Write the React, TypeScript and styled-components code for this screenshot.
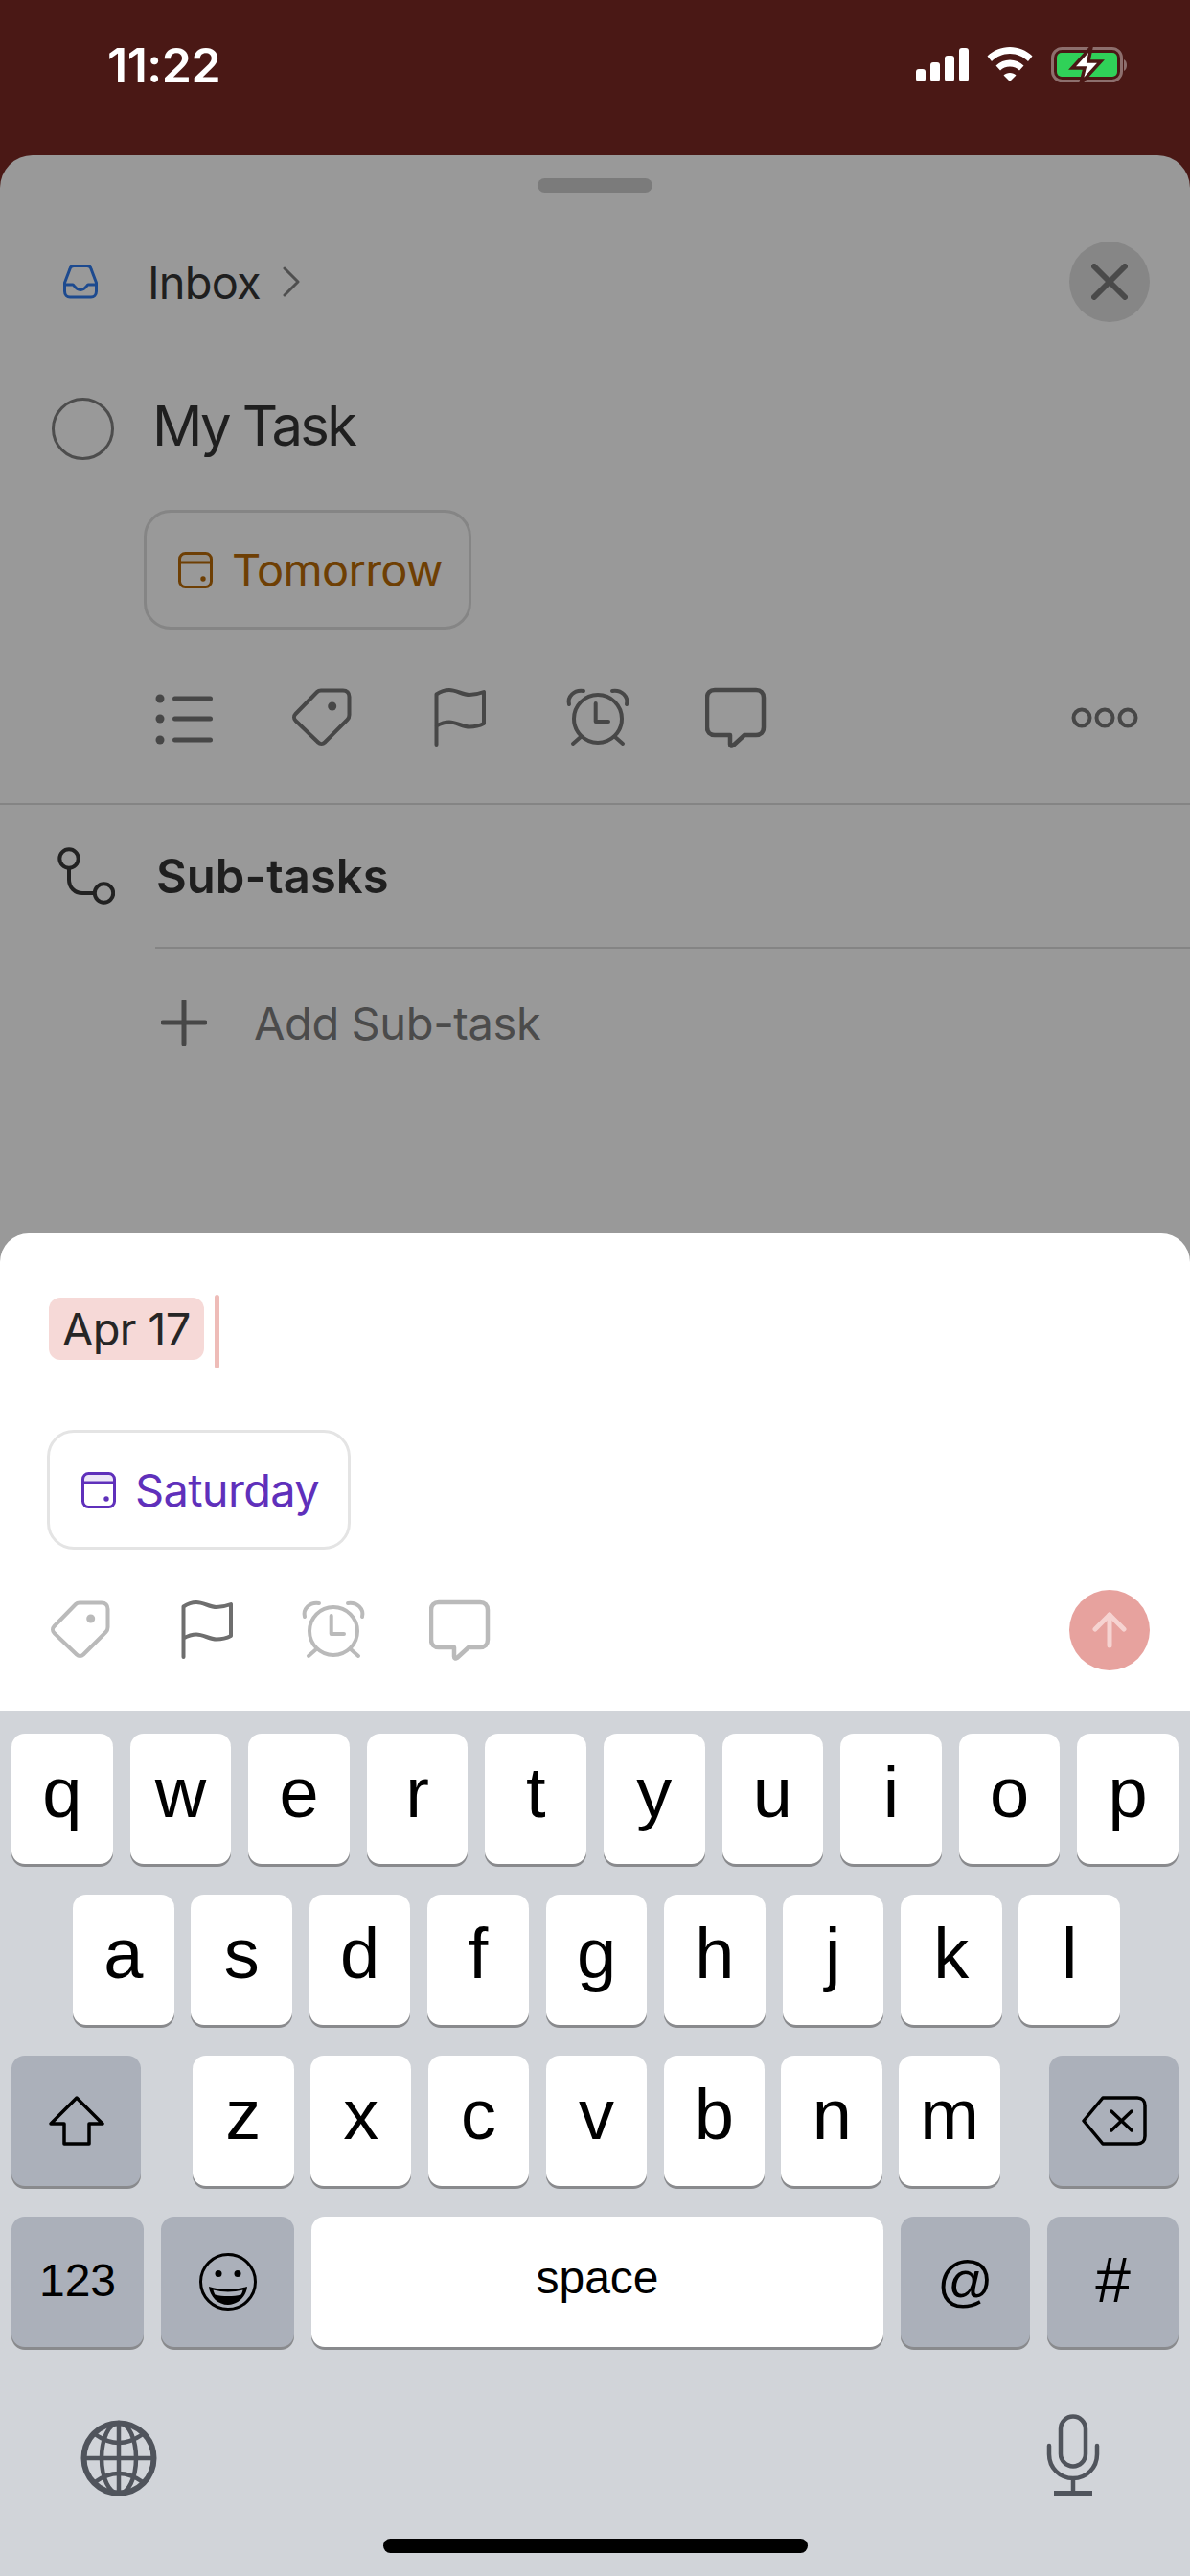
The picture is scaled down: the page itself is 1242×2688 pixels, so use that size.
import * as React from 'react';
import styled, { createGlobalStyle } from 'styled-components';

const GlobalStyle = createGlobalStyle`
  html, body {
    margin: 0;
    padding: 0;
    background: #4a1815;
  }
  * {
    box-sizing: border-box;
  }
`;

const Screen = styled.div`
  width: 1242px;
  height: 2688px;
  display: flex;
  flex-direction: column;
  overflow: hidden;
  background: #4a1815;
  font-family: Inter, 'Liberation Sans', sans-serif;
`;

const StatusBar = styled.div`
  height: 162px;
  flex: none;
  display: flex;
  justify-content: space-between;
  padding: 43px 65px 0 112px;
`;

const Clock = styled.span`
  color: #fff;
  font-size: 50px;
  font-weight: 600;
  line-height: 50px;
  letter-spacing: -0.5px;
`;

const StatusIcons = styled.div`
  display: flex;
  align-items: flex-start;
  gap: 19px;
  padding-top: 6px;
`;

const Sheet = styled.div`
  flex: 1;
  display: flex;
  flex-direction: column;
  background: #999999;
  border-radius: 34px 34px 0 0;
`;

const Handle = styled.div`
  width: 120px;
  height: 15px;
  margin: 24px auto 0;
  border-radius: 8px;
  background: #7b7b7b;
`;

const HeaderRow = styled.div`
  height: 84px;
  margin-top: 51px;
  padding: 0 42px 0 66px;
  display: flex;
  align-items: center;
`;

const ProjectName = styled.span`
  margin-left: 52px;
  font-size: 47px;
  letter-spacing: -0.8px;
  color: #1f1f1f;
`;

const Chevron = styled.svg`
  margin-left: 23px;
`;

const CloseButton = styled.div`
  width: 84px;
  height: 84px;
  margin-left: auto;
  border-radius: 50%;
  background: #868686;
  display: flex;
  align-items: center;
  justify-content: center;
`;

const TaskRow = styled.div`
  height: 65px;
  margin-top: 79px;
  padding-left: 54px;
  display: flex;
  align-items: center;
`;

const TaskCircle = styled.div`
  width: 65px;
  height: 65px;
  border-radius: 50%;
  border: 3px solid #4d4d4d;
`;

const TaskTitle = styled.span`
  margin-left: 40px;
  padding-bottom: 8px;
  font-size: 58px;
  letter-spacing: -2.6px;
  color: #1f1f1f;
`;

const DatePill = styled.div<{ $border: string; $color: string; $left: number; $top: number; $right: number }>`
  align-self: flex-start;
  height: 125px;
  margin-top: ${props => props.$top}px;
  margin-left: ${props => props.$left}px;
  padding: 0 ${props => props.$right}px 0 33px;
  display: flex;
  align-items: center;
  gap: 20px;
  border: 3px solid ${props => props.$border};
  border-radius: 28px;
  font-size: 47px;
  letter-spacing: -0.7px;
  color: ${props => props.$color};
`;

const ActionRow = styled.div<{ $slot: number; $left: number }>`
  display: flex;
  align-items: center;
  padding-left: ${props => props.$left}px;
  & > span {
    width: ${props => props.$slot}px;
    display: flex;
    justify-content: center;
  }
`;

const TaskActions = styled(ActionRow)`
  height: 64px;
  margin-top: 60px;
  padding-right: 54px;
`;

const MoreIcon = styled.svg`
  margin-left: auto;
`;

const Divider = styled.div<{ $left?: number }>`
  height: 2px;
  flex: none;
  margin-left: ${props => props.$left ?? 0}px;
  background: #848484;
`;

const SectionDivider = styled(Divider)`
  margin-top: 57px;
`;

const SubHeader = styled.div`
  height: 148px;
  padding-left: 60px;
  display: flex;
  align-items: center;
`;

const SubTitle = styled.span`
  margin-left: 43px;
  font-size: 49px;
  font-weight: 600;
  color: #1f1f1f;
`;

const AddRow = styled.div`
  height: 156px;
  padding: 0 0 2px 168px;
  display: flex;
  align-items: center;
`;

const AddLabel = styled.span`
  margin-left: 49px;
  font-size: 47px;
  letter-spacing: -0.4px;
  color: #4b4b4b;
`;

const Composer = styled.div`
  height: 498px;
  margin-top: auto;
  flex: none;
  display: flex;
  flex-direction: column;
  background: #ffffff;
  border-radius: 30px 30px 0 0;
`;

const InputRow = styled.div`
  height: 77px;
  margin-top: 64px;
  padding-left: 51px;
  display: flex;
  align-items: flex-start;
`;

const DateToken = styled.span`
  height: 65px;
  margin-top: 3px;
  padding: 0 14px;
  display: flex;
  align-items: center;
  border-radius: 12px;
  background: #f6d9d7;
  font-size: 47px;
  letter-spacing: -0.7px;
  color: #262626;
`;

const Caret = styled.div`
  width: 5px;
  height: 77px;
  margin-left: 11px;
  border-radius: 3px;
  background: #eebcb8;
`;

const ComposerActions = styled(ActionRow)`
  height: 84px;
  margin-top: 42px;
  padding-right: 42px;
`;

const SendButton = styled.div`
  width: 84px;
  height: 84px;
  margin-left: auto;
  border-radius: 50%;
  background: #e7a29e;
  display: flex;
  align-items: center;
  justify-content: center;
`;

const Keyboard = styled.div`
  height: 903px;
  flex: none;
  padding: 24px 12px 0;
  display: flex;
  flex-direction: column;
  gap: 32px;
  background: #d1d4d9;
  position: relative;
`;

const KeyRow = styled.div<{ $left?: number; $right?: number }>`
  display: flex;
  justify-content: space-between;
  padding: 0 ${props => props.$right ?? 0}px 0 ${props => props.$left ?? 0}px;
`;

const Key = styled.div<{ $width?: number; $dark?: boolean; $size?: number; $lift?: number }>`
  width: ${props => props.$width ?? 105.6}px;
  height: 136px;
  flex: none;
  padding-bottom: ${props => props.$lift ?? 0}px;
  display: flex;
  align-items: center;
  justify-content: center;
  border-radius: 14px;
  background: ${props => (props.$dark ? '#abb0ba' : '#ffffff')};
  box-shadow: 0 3px 0 #898a8d;
  color: #000000;
  font-family: 'Liberation Sans', Arial, sans-serif;
  font-size: ${props => props.$size ?? 74}px;
`;

const LetterGroup = styled.div`
  width: 843px;
  margin-left: 3px;
  display: flex;
  justify-content: space-between;
`;

const KeyboardFooter = styled.div`
  height: 86px;
  margin-top: 38px;
  padding: 0 82px 0 72px;
  display: flex;
  justify-content: space-between;
  align-items: flex-end;
`;

const HomeIndicator = styled.div`
  width: 443px;
  height: 15px;
  position: absolute;
  left: 400px;
  bottom: 24px;
  border-radius: 8px;
  background: #000000;
`;

const SignalIcon = () => (
  <svg width="56" height="36" viewBox="0 0 56 36" fill="#fff">
    <rect x="1" y="23" width="10" height="13" rx="3" />
    <rect x="16" y="16" width="10" height="20" rx="3" />
    <rect x="31" y="9" width="10" height="27" rx="3" />
    <rect x="46" y="1" width="10" height="35" rx="3" />
  </svg>
);

const WifiIcon = () => (
  <svg width="48" height="36" viewBox="0 0 48 36" fill="#fff">
    <path d="M24 0C33 0 41 3.500 47.500 9.500L43 15C38 10 31.500 7 24 7S10 10 5 15L.5 9.500C7 3.500 15 0 24 0Z" />
    <path d="M24 13.500C29.500 13.500 34.500 15.500 38.500 19.500L34 24.500C31.500 22 28 20.500 24 20.500S16.500 22 14 24.500L9.500 19.500C13.500 15.500 18.500 13.500 24 13.500Z" />
    <path d="M24 27C26.500 27 29 28 30.500 29.500L24 36L17.500 29.500C19 28 21.500 27 24 27Z" />
  </svg>
);

const BatteryIcon = () => (
  <svg width="80" height="38" viewBox="0 0 80 38">
    <rect x="1.500" y="1.500" width="72" height="34" rx="10" fill="none" stroke="#8d6f6d" strokeWidth="3" />
    <path d="M76 13C78 14 79 16 79 19S78 24 76 25Z" fill="#8d6f6d" />
    <rect x="6" y="6" width="63" height="25" rx="5" fill="#30d158" />
    <path d="M42 0L22 22H35L31 38L52 15H39Z" fill="#fff" stroke="#4a1815" strokeWidth="3.500" strokeLinejoin="miter" />
  </svg>
);

const InboxIcon = () => (
  <svg width="36" height="36" viewBox="0 0 36 36" fill="none" stroke="#1d4a8f" strokeWidth="3" strokeLinecap="round" strokeLinejoin="round">
    <path d="M11 1.500H25C27 1.500 28.500 2.500 29 4.500L34.500 19V28C34.500 32 32 34 29 34H7C4 34 1.500 32 1.500 28V19L7 4.500C7.500 2.500 9 1.500 11 1.500Z" />
    <path d="M2 21H10C11.500 21 12.500 26.500 18 26.500C23.500 26.500 24.500 21 26 21H34" />
  </svg>
);

const ChevronIcon = () => (
  <Chevron width="18" height="32" viewBox="0 0 18 32" fill="none" stroke="#4f4f4f" strokeWidth="3" strokeLinecap="round" strokeLinejoin="round">
    <path d="M2 2L16 16L2 30" />
  </Chevron>
);

const CalendarIcon = ({ color }: { color: string }) => (
  <svg width="36" height="38" viewBox="0 0 36 38" fill="none" stroke={color} strokeWidth="3" strokeLinecap="round">
    <path d="M2 11V7C2 4 4 2 7 2H29C32 2 34 4 34 7V11Z" fill={color} fillOpacity="0.12" stroke="none" />
    <rect x="1.500" y="1.500" width="33" height="35" rx="6" />
    <path d="M2 11H34" />
    <circle cx="26" cy="28" r="1.200" fill={color} />
  </svg>
);

const ListIcon = ({ color }: { color: string }) => (
  <svg width="60" height="58" viewBox="0 0 60 58" fill={color}>
    <circle cx="5" cy="9" r="4.500" />
    <circle cx="5" cy="30" r="4.500" />
    <circle cx="5" cy="52" r="4.500" />
    <rect x="18" y="6.500" width="42" height="5" rx="2.500" />
    <rect x="18" y="27.500" width="42" height="5" rx="2.500" />
    <rect x="18" y="49.500" width="42" height="5" rx="2.500" />
  </svg>
);

const TagIcon = ({ color }: { color: string }) => (
  <svg width="64" height="64" viewBox="0 0 64 64" fill="none" stroke={color} strokeWidth="4" strokeLinejoin="round">
    <path d="M31 3.500H54C58 3.500 60.500 6 60.500 10V29C60.500 31 60 32.500 58.500 34L35 57.500C33 59.500 30 59.500 28 57.500L4.500 35C2.500 33 2.500 30 4.500 28L27 5C28 4 29.500 3.500 31 3.500Z" />
    <circle cx="42.700" cy="20" r="4.500" fill={color} stroke="none" />
  </svg>
);

const FlagIcon = ({ color }: { color: string }) => (
  <svg width="56" height="64" viewBox="0 0 56 64" fill="none" stroke={color} strokeWidth="4" strokeLinecap="round" strokeLinejoin="round">
    <path d="M3.500 60V7.500C8 4.500 12 3 17 3C24 3 31 8 38 8C44 8 49 6.500 53 5V38C49 40 44 41.500 38 41.500C31 41.500 24 36.500 17 36.500C12 36.500 8 38 3.500 40.500" />
  </svg>
);

const AlarmIcon = ({ color }: { color: string }) => (
  <svg width="68" height="64" viewBox="0 0 68 64" fill="none" stroke={color} strokeWidth="4" strokeLinecap="round" strokeLinejoin="round">
    <circle cx="34" cy="33" r="25" />
    <path d="M31.700 17V36H45" />
    <path d="M4 18C2 10 9 2.500 19 4" />
    <path d="M64 18C66 10 59 2.500 49 4" />
    <path d="M15.700 52.300L8 59" />
    <path d="M52.300 52.300L60 59" />
  </svg>
);

const CommentIcon = ({ color }: { color: string }) => (
  <svg width="64" height="64" viewBox="0 0 64 64" fill="none" stroke={color} strokeWidth="4.500" strokeLinejoin="round">
    <path d="M10 3H53C58 3 61 6 61 11V42C61 47 58 50 53 50H41L29 61C27.500 62 26 61.500 26 59.500V50H10C5 50 2 47 2 42V11C2 6 5 3 10 3Z" />
  </svg>
);

const SubTaskIcon = () => (
  <svg width="60" height="60" viewBox="0 0 60 60" fill="none" stroke="#222222" strokeWidth="4">
    <circle cx="12" cy="12" r="9.700" />
    <path d="M12 22V34C12 42 18 48 26 48H39" />
    <circle cx="48.500" cy="48" r="9.700" />
  </svg>
);

const ShiftIcon = () => (
  <svg width="58" height="52" viewBox="0 0 58 52" fill="none" stroke="#000" strokeWidth="3.500" strokeLinejoin="round">
    <path d="M29 2L56 29H42V50H16V29H2Z" />
  </svg>
);

const DeleteIcon = () => (
  <svg width="68" height="52" viewBox="0 0 68 52" fill="none" stroke="#000" strokeWidth="3.500" strokeLinecap="round" strokeLinejoin="round">
    <path d="M22 2H58C63 2 66 5 66 10V42C66 47 63 50 58 50H22L2 26Z" />
    <path d="M31 16L52 36" />
    <path d="M52 16L31 36" />
  </svg>
);

const EmojiIcon = () => (
  <svg width="60" height="60" viewBox="0 0 60 60" fill="none" stroke="#000" strokeWidth="3">
    <circle cx="30" cy="30" r="28.500" />
    <circle cx="20" cy="21.500" r="3.500" fill="#000" stroke="none" />
    <circle cx="40" cy="21.500" r="3.500" fill="#000" stroke="none" />
    <path d="M10 35C22 39 38 39 50 35C49 46 40 54 30 54S11 46 10 35Z" fill="#000" stroke="none" />
    <path d="M14.500 38.500C24 41 36 41 45.500 38.500C45 41 44 43 43.500 43.500C36 45.500 24 45.500 16.500 43.500C15.500 42 15 40 14.500 38.500Z" fill="#abb0ba" stroke="none" />
  </svg>
);

const GlobeIcon = () => (
  <svg width="80" height="80" viewBox="0 0 80 80" fill="none" stroke="#50545c" strokeWidth="4.500">
    <circle cx="40" cy="40" r="36.500" strokeWidth="6" />
    <ellipse cx="40" cy="40" rx="18" ry="37" />
    <path d="M40 3V77" />
    <path d="M3 40H77" />
    <path d="M15 15Q40 33 65 15" />
    <path d="M15 65Q40 47 65 65" />
  </svg>
);

const MicIcon = () => (
  <svg width="56" height="86" viewBox="0 0 56 86" fill="none" stroke="#50545c" strokeWidth="4.500">
    <rect x="15" y="2.500" width="26" height="52" rx="13" />
    <path d="M3 33V42C3 56 14 67 28 67S53 56 53 42V33" strokeLinecap="round" />
    <path d="M28 67V82" />
    <path d="M8 83H48" strokeWidth="6" />
  </svg>
);

const rows = ['qwertyuiop', 'asdfghjkl', 'zxcvbnm'];

export default function App(): React.ReactElement {
  return (
    <>
      <GlobalStyle />
      <Screen>
        <StatusBar>
          <Clock>11:22</Clock>
          <StatusIcons>
            <SignalIcon />
            <WifiIcon />
            <BatteryIcon />
          </StatusIcons>
        </StatusBar>
        <Sheet>
          <Handle />
          <HeaderRow>
            <InboxIcon />
            <ProjectName>Inbox</ProjectName>
            <ChevronIcon />
            <CloseButton>
              <svg width="38" height="38" viewBox="0 0 38 38" stroke="#4a4a4a" strokeWidth="6" strokeLinecap="round">
                <path d="M3 3L35 35" />
                <path d="M35 3L3 35" />
              </svg>
            </CloseButton>
          </HeaderRow>
          <TaskRow>
            <TaskCircle />
            <TaskTitle>My Task</TaskTitle>
          </TaskRow>
          <DatePill $border="#858585" $color="#6e3f04" $left={150} $top={52} $right={27}>
            <CalendarIcon color="#6e3f04" />
            Tomorrow
          </DatePill>
          <TaskActions $slot={144} $left={120}>
            <span><ListIcon color="#474747" /></span>
            <span><TagIcon color="#474747" /></span>
            <span><FlagIcon color="#474747" /></span>
            <span><AlarmIcon color="#474747" /></span>
            <span><CommentIcon color="#474747" /></span>
            <MoreIcon width="70" height="22" viewBox="0 0 70 22" fill="none" stroke="#474747" strokeWidth="4">
              <circle cx="11" cy="11" r="8.500" />
              <circle cx="35" cy="11" r="8.500" />
              <circle cx="59" cy="11" r="8.500" />
            </MoreIcon>
          </TaskActions>
          <SectionDivider />
          <SubHeader>
            <SubTaskIcon />
            <SubTitle>Sub-tasks</SubTitle>
          </SubHeader>
          <Divider $left={162} />
          <AddRow>
            <svg width="48" height="48" viewBox="0 0 48 48" stroke="#474747" strokeWidth="5" strokeLinecap="round">
              <path d="M24 2V46" />
              <path d="M2 24H46" />
            </svg>
            <AddLabel>Add Sub-task</AddLabel>
          </AddRow>
          <Composer>
            <InputRow>
              <DateToken>Apr 17</DateToken>
              <Caret />
            </InputRow>
            <DatePill $border="#e4e4e4" $color="#5f30bb" $left={49} $top={64} $right={30}>
              <CalendarIcon color="#5f30bb" />
              Saturday
            </DatePill>
            <ComposerActions $slot={132} $left={18}>
              <span><TagIcon color="#bababa" /></span>
              <span><FlagIcon color="#6e6e6e" /></span>
              <span><AlarmIcon color="#bababa" /></span>
              <span><CommentIcon color="#bababa" /></span>
              <SendButton>
                <svg width="38" height="38" viewBox="0 0 38 38" fill="none" stroke="#f6d3d1" strokeWidth="5" strokeLinecap="round" strokeLinejoin="round">
                  <path d="M19 3V35" />
                  <path d="M4 18L19 3L34 18" />
                </svg>
              </SendButton>
            </ComposerActions>
          </Composer>
        </Sheet>
        <Keyboard>
          <KeyRow>
            {rows[0].split('').map(letter => (
              <Key key={letter} $lift={14}>{letter}</Key>
            ))}
          </KeyRow>
          <KeyRow $left={64} $right={61}>
            {rows[1].split('').map(letter => (
              <Key key={letter} $lift={14}>{letter}</Key>
            ))}
          </KeyRow>
          <KeyRow>
            <Key $dark $width={135}><ShiftIcon /></Key>
            <LetterGroup>
              {rows[2].split('').map(letter => (
                <Key key={letter} $lift={14}>{letter}</Key>
              ))}
            </LetterGroup>
            <Key $dark $width={135}><DeleteIcon /></Key>
          </KeyRow>
          <KeyRow>
            <Key $dark $width={138} $size={48} $lift={3}>123</Key>
            <Key $dark $width={139}><EmojiIcon /></Key>
            <Key $width={597} $size={48} $lift={10}>space</Key>
            <Key $dark $width={135} $size={58} $lift={4}>@</Key>
            <Key $dark $width={137} $size={66} $lift={4}>#</Key>
          </KeyRow>
          <KeyboardFooter>
            <GlobeIcon />
            <MicIcon />
          </KeyboardFooter>
          <HomeIndicator />
        </Keyboard>
      </Screen>
    </>
  );
}
